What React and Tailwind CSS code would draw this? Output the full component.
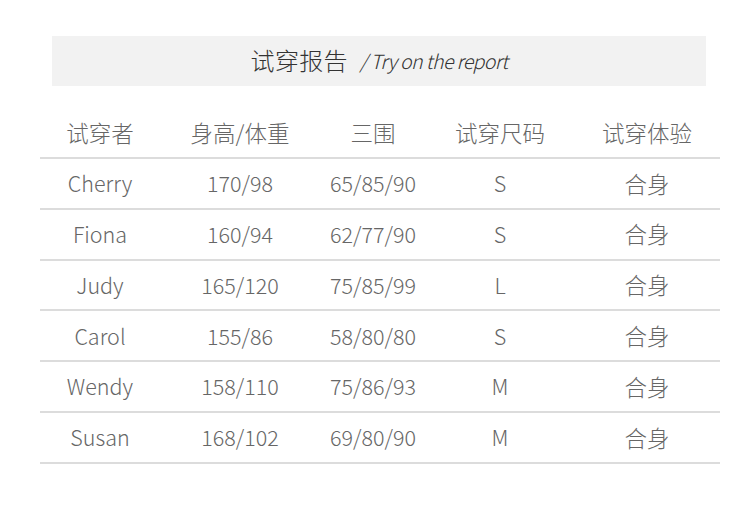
import React from "react";

const rows = [
  ["Cherry", "170/98", "65/85/90", "S", "合身"],
  ["Fiona", "160/94", "62/77/90", "S", "合身"],
  ["Judy", "165/120", "75/85/99", "L", "合身"],
  ["Carol", "155/86", "58/80/80", "S", "合身"],
  ["Wendy", "158/110", "75/86/93", "M", "合身"],
  ["Susan", "168/102", "69/80/90", "M", "合身"],
];

const heads = ["试穿者", "身高/体重", "三围", "试穿尺码", "试穿体验"];

const cols = "grid grid-cols-[120px_160px_106px_148px_146px]";

const App = () => {
  return (
    <div
      className="w-[750px] h-[528px] bg-white pt-[36px]"
      style={{ fontFamily: '"Noto Sans CJK SC", "Noto Sans", sans-serif' }}
    >
      {/* Title band */}
      <div className="mx-[52px] w-[654px] h-[50px] bg-[#f2f2f2] flex items-center justify-center">
        <span className="text-[24px] text-[#333] font-light tracking-[0.3px] -mt-[2px]">试穿报告</span>
        <span className="ml-[12px] text-[19.5px] text-[#333] font-light italic tracking-[-0.6px]">
          / Try on the report
        </span>
      </div>

      {/* Table */}
      <div className="mx-[40px] w-[680px] mt-[22px]">
        <div className={`${cols} h-[51px] items-center border-b-2 border-[#dcdcdc]`}>
          {heads.map((h, i) => (
            <div key={i} className="text-center text-[22.5px] text-[#666] font-light">
              {h}
            </div>
          ))}
        </div>
        {rows.map((r, i) => (
          <div key={i} className={`${cols} h-[50.8px] items-center border-b-2 border-[#dcdcdc]`}>
            {r.map((c, j) => (
              <div
                key={j}
                className={`text-center text-[#666] font-light ${j === 4 ? "text-[22.5px]" : "text-[21.5px]"}`}
              >
                {c}
              </div>
            ))}
          </div>
        ))}
      </div>
    </div>
  );
};

export default App;
